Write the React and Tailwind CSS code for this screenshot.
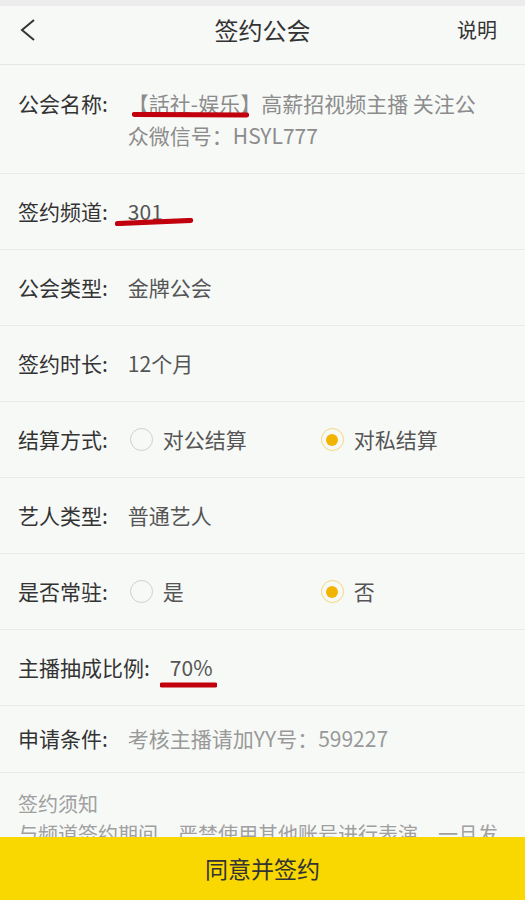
const font = { fontFamily: '"Noto Sans CJK SC", "Noto Sans", sans-serif' };

const Radio = ({ checked }) =>
  checked ? (
    <span className="flex h-[23px] w-[23px] items-center justify-center rounded-full border-[1.5px] border-[#f3d77a]">
      <span className="h-[12px] w-[12px] rounded-full bg-[#f1b500]" />
    </span>
  ) : (
    <span className="h-[23px] w-[23px] rounded-full border-[1.5px] border-[#cfcfcf]" />
  );

const Row = ({ label, children, className = "h-[76px]" }) => (
  <div className={`relative flex items-center border-b border-[#e9ece9] px-[18px] ${className}`}>
    <span className="shrink-0 text-[#333]">{label}</span>
    {children}
  </div>
);

const Options = ({ a, b, selected }) => (
  <div className="ml-[22px] flex items-center">
    <div className="flex w-[191px] items-center gap-[10px] text-[#555]">
      <Radio checked={selected === 0} />
      <span>{a}</span>
    </div>
    <div className="flex items-center gap-[10px] text-[#555]">
      <Radio checked={selected === 1} />
      <span>{b}</span>
    </div>
  </div>
);

const Mark = ({ className, d }) => (
  <svg className={`pointer-events-none absolute ${className}`} viewBox="0 0 100 10" preserveAspectRatio="none">
    <path d={d} stroke="#c2000d" strokeWidth="5" strokeLinecap="round" fill="none" vectorEffect="non-scaling-stroke" />
  </svg>
);

export default function App() {
  return (
    <div className="flex h-[900px] w-[525px] flex-col overflow-hidden bg-[#f7f9f7] text-[21px]" style={font}>
      <div className="h-[6px] bg-[#ececec]" />
      <div className="flex h-[48px] items-center px-[18px]">
        <div className="w-[80px]">
          <svg width="18" height="24" viewBox="0 0 18 24" className="ml-[1px]">
            <polyline points="15,2 3,12 15,22" fill="none" stroke="#333" strokeWidth="2" />
          </svg>
        </div>
        <span className="flex-1 text-center text-[24px] text-[#333]">签约公会</span>
        <div className="w-[80px] pr-[10px] text-right text-[20px] text-[#333]">说明</div>
      </div>
      <div className="h-[11px] border-b border-[#e4e7e4]" />

      <div className="flex-1 overflow-hidden">
        <div className="relative flex items-start border-b border-[#e9ece9] px-[18px] py-[22px] leading-[32px]">
          <span className="shrink-0 text-[#333]">公会名称:</span>
          <span className="ml-[20px] text-[#8c8c8c]">
            【話社-娱乐】高薪招视频主播 关注公
            <br />
            众微信号：HSYL777
          </span>
          <Mark className="left-[132px] top-[47px] h-[6px] w-[117px]" d="M2 4 L98 5" />
        </div>

        <Row label="签约频道:">
          <span className="ml-[20px] text-[#555]">301</span>
          <Mark className="left-[115px] top-[44px] h-[8px] w-[78px]" d="M3 7 L97 3" />
        </Row>
        <Row label="公会类型:">
          <span className="ml-[20px] text-[#555]">金牌公会</span>
        </Row>
        <Row label="签约时长:">
          <span className="ml-[20px] text-[#555]">12个月</span>
        </Row>
        <Row label="结算方式:">
          <Options a="对公结算" b="对私结算" selected={1} />
        </Row>
        <Row label="艺人类型:">
          <span className="ml-[20px] text-[#555]">普通艺人</span>
        </Row>
        <Row label="是否常驻:">
          <Options a="是" b="否" selected={1} />
        </Row>
        <Row label="主播抽成比例:">
          <span className="ml-[20px] text-[#555]">70%</span>
          <Mark className="left-[160px] top-[52px] h-[6px] w-[57px]" d="M3 5 L97 5" />
        </Row>
        <Row label="申请条件:" className="h-[67px]">
          <span className="ml-[20px] text-[#999]">考核主播请加YY号：599227</span>
        </Row>

        <div className="px-[18px] pt-[16px] text-[20px] leading-[30px] text-[#a0a0a0]">
          <p>签约须知</p>
          <p>与频道签约期间，严禁使用其他账号进行表演，一旦发现违规行为，公会有权解除合约。</p>
        </div>
      </div>

      <div className="flex h-[63px] shrink-0 items-center justify-center bg-[#f8d800] text-[23px] text-[#333]">
        同意并签约
      </div>
    </div>
  );
}
